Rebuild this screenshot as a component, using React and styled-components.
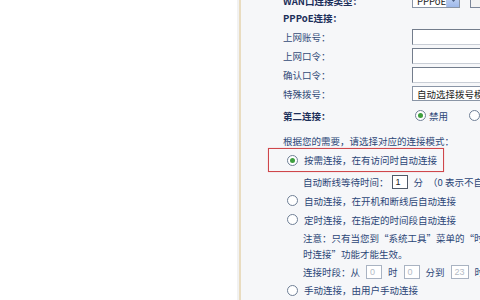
import React from "react";
import styled, { createGlobalStyle } from "styled-components";

const Global = createGlobalStyle`
	html, body {
		margin: 0;
		padding: 0;
		background: #fff;
	}
	body {
		font-family: "Noto Sans CJK SC", "Noto Sans", sans-serif;
		font-size: 9.5px;
	}
`;

const Page = styled.div`
	display: flex;
	width: 480px;
	height: 300px;
	overflow: hidden;
	background: #fff;
`;

const Blank = styled.div`
	flex: none;
	width: 237px;
	background: #fff;
	border-right: 2px solid #f2f2f2;
`;

const Panel = styled.div`
	flex: 1;
	min-width: 0;
	border-left: 2px solid #e9dcc0;
	background: #f6f7f9;
	padding-left: 27px;
	overflow: hidden;
	color: #2c4677;
	white-space: nowrap;
`;

const Content = styled.div`
	margin-top: -7px;
	display: flex;
	flex-direction: column;
`;

const FieldRow = styled.div`
	display: grid;
	grid-template-columns: 129px 1fr;
	align-items: center;
	height: ${p => p.$h || 19}px;
	padding-left: 15px;
`;

const Label = styled.span`
	font-weight: ${p => (p.$bold ? 700 : 400)};
	color: ${p => (p.$bold ? "#1c2f5a" : "#344c78")};
`;

const Field = styled.div`
	display: flex;
	align-items: center;
	gap: ${p => p.$gap || 0}px;
`;

const TextBox = styled.div`
	box-sizing: border-box;
	width: 150px;
	height: 16px;
	flex: none;
	background: #fff;
	border: 1px solid #737d8c;
	border-right-color: #c9ced6;
	border-bottom-color: #c9ced6;
`;

const Select = styled.div`
	box-sizing: border-box;
	display: flex;
	align-items: center;
	flex: none;
	width: ${p => p.$w}px;
	height: ${p => p.$ht || 15}px;
	background: #fff;
	border: 1px solid #8a95a6;
	padding-left: 4px;
	color: #222;
	overflow: hidden;
`;

const SelectText = styled.span`
	flex: 1;
	font-size: 9.5px;
`;

const ArrowBtn = styled.span`
	flex: none;
	width: 12px;
	height: 100%;
	display: flex;
	align-items: center;
	justify-content: center;
	background: linear-gradient(#c9d9f6, #9fb9ea);
	border-left: 1px solid #b7c7e6;
`;

const SideButton = styled.span`
	flex: none;
	width: 30px;
	height: 14px;
	margin-left: 10px;
	box-sizing: border-box;
	border: 1px solid #7b8699;
	background: #f3f3f3;
`;

const Radio = styled.span`
	flex: none;
	box-sizing: border-box;
	width: 11px;
	height: 11px;
	border-radius: 50%;
	border: 1px solid #6f7f96;
	background: #fff;
	display: flex;
	align-items: center;
	justify-content: center;
	&::after {
		content: "";
		width: 5px;
		height: 5px;
		border-radius: 50%;
		background: ${p => (p.$checked ? "#3e9f3e" : "transparent")};
	}
`;

const Choice = styled.span`
	display: flex;
	align-items: center;
	gap: ${p => p.$gap || 6}px;
	margin-left: ${p => p.$ml || 0}px;
`;

const Question = styled.div`
	display: flex;
	align-items: center;
	height: ${p => p.$h}px;
	padding-left: 15px;
	margin-top: ${p => p.$mt || 0}px;
`;

const HighlightBox = styled.div`
	box-sizing: border-box;
	display: flex;
	align-items: center;
	width: 176px;
	height: 24px;
	padding-left: 18px;
	border: 1px solid #cf474b;
	box-shadow: 0 0 1px rgba(207, 71, 75, 0.4);
	gap: 6px;
`;

const OptionRow = styled.div`
	display: flex;
	align-items: center;
	gap: 6px;
	height: ${p => p.$h || 19}px;
	padding-left: 19px;
`;

const SubRow = styled.div`
	display: flex;
	align-items: center;
	gap: ${p => p.$gap || 5}px;
	height: ${p => p.$h || 19}px;
	padding-left: 35px;
`;

const Note = styled.div`
	padding-left: 35px;
	line-height: 16px;
	padding-top: 1px;
	padding-bottom: 1px;
`;

const NumBox = styled.span`
	box-sizing: border-box;
	flex: none;
	display: flex;
	align-items: center;
	width: ${p => p.$w || 16}px;
	height: ${p => p.$ht || 14}px;
	padding-left: 3px;
	background: #fff;
	border: 1px solid ${p => (p.$off ? "#a9b3c2" : "#4f5968")};
	color: ${p => (p.$off ? "#b4bbc6" : "#222")};
	font-size: 9px;
	font-family: "Liberation Sans", sans-serif;
`;

function ArrowIcon() {
	return (
		<svg width="7" height="5" viewBox="0 0 7 5">
			<path d="M0.5 0.5 L3.5 4 L6.5 0.5 Z" fill="#4d6185" />
		</svg>
	);
}

export default function App() {
	return (
		<>
			<Global />
			<Page>
				<Blank />
				<Panel>
					<Content>
						<FieldRow $h={15}>
							<Label $bold>WAN口连接类型：</Label>
							<Field>
								<Select $w={48} $ht={14}>
									<SelectText>PPPoE</SelectText>
									<ArrowBtn><ArrowIcon /></ArrowBtn>
								</Select>
								<SideButton />
							</Field>
						</FieldRow>
						<FieldRow $h={19}>
							<Label $bold>PPPoE连接：</Label>
						</FieldRow>
						<FieldRow>
							<Label>上网账号：</Label>
							<Field><TextBox /></Field>
						</FieldRow>
						<FieldRow>
							<Label>上网口令：</Label>
							<Field><TextBox /></Field>
						</FieldRow>
						<FieldRow>
							<Label>确认口令：</Label>
							<Field><TextBox /></Field>
						</FieldRow>
						<FieldRow>
							<Label>特殊拨号：</Label>
							<Field>
								<Select $w={150}>
									<SelectText>自动选择拨号模式</SelectText>
								</Select>
							</Field>
						</FieldRow>
						<FieldRow $h={25}>
							<Label $bold>第二连接：</Label>
							<Field>
								<Choice $gap={3} $ml={3}>
									<Radio $checked />
									禁用
								</Choice>
								<Choice $gap={3} $ml={21}>
									<Radio />
									动态IP
								</Choice>
							</Field>
						</FieldRow>
						<Question $h={14} $mt={6}>
							根据您的需要，请选择对应的连接模式：
						</Question>
						<HighlightBox>
							<Radio $checked />
							按需连接，在有访问时自动连接
						</HighlightBox>
						<SubRow $gap={3}>
							自动断线等待时间：
							<NumBox>1</NumBox>
							<span style={{ marginLeft: 3 }}>分</span>
							<span style={{ marginLeft: 2 }}>（0 表示不自动断线）</span>
						</SubRow>
						<OptionRow>
							<Radio />
							自动连接，在开机和断线后自动连接
						</OptionRow>
						<OptionRow $h={19}>
							<Radio />
							定时连接，在指定的时间段自动连接
						</OptionRow>
						<Note>
							注意：只有当您到“系统工具”菜单的“时间设置”项设置了当前时间后，“定
							<br />
							时连接”功能才能生效。
						</Note>
						<SubRow $h={18} $gap={6}>
							连接时段：从
							<NumBox $off>0</NumBox>
							时
							<NumBox $off>0</NumBox>
							分到
							<NumBox $off $w={18}>23</NumBox>
							时
						</SubRow>
						<OptionRow $h={18}>
							<Radio />
							手动连接，由用户手动连接
						</OptionRow>
					</Content>
				</Panel>
			</Page>
		</>
	);
}
